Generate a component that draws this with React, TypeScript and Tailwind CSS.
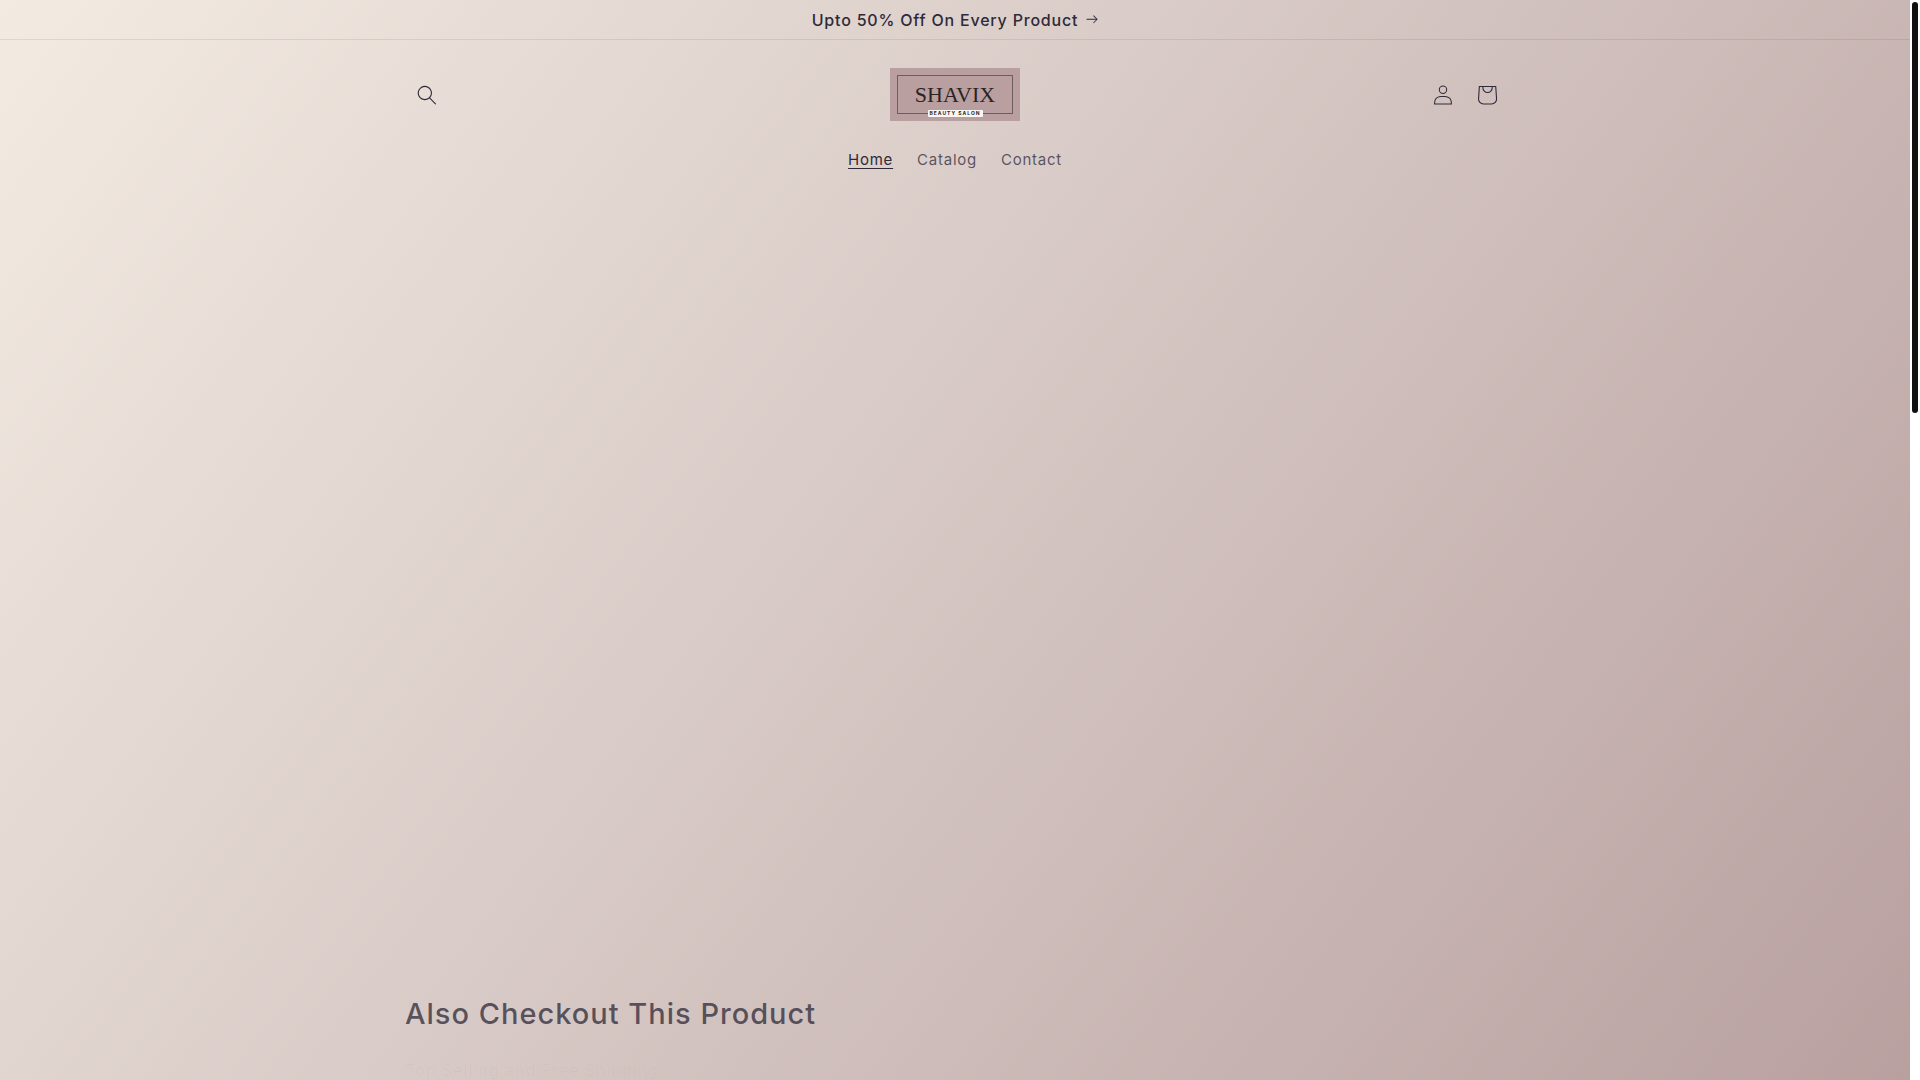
import React from "react";

const navItems = [
  { label: "Home", active: true },
  { label: "Catalog", active: false },
  { label: "Contact", active: false },
];

function SearchIcon() {
  return (
    <svg viewBox="0 0 18 19" className="size-5" fill="currentColor" fillRule="evenodd" aria-hidden="true">
      <path d="M11.03 11.68A5.784 5.784 0 112.85 3.5a5.784 5.784 0 018.18 8.18zm.26 1.12a6.78 6.78 0 11.72-.7l5.4 5.4a.5.5 0 11-.71.7l-5.41-5.4z" />
    </svg>
  );
}

function AccountIcon() {
  return (
    <svg viewBox="0 0 18 19" className="size-5" fill="currentColor" fillRule="evenodd" aria-hidden="true">
      <path d="M6 4.5a3 3 0 116 0 3 3 0 01-6 0zm3-4a4 4 0 100 8 4 4 0 000-8zm5.58 12.15c1.12.82 1.83 2.24 1.91 4.85H1.51c.08-2.6.79-4.03 1.9-4.85C4.66 11.75 6.5 11.5 9 11.5s4.35.26 5.58 1.15zM9 10.5c-2.5 0-4.65.24-6.17 1.35C1.27 12.98.5 14.93.5 18v.5h17V18c0-3.07-.77-5.02-2.33-6.15-1.52-1.1-3.67-1.35-6.17-1.35z" />
    </svg>
  );
}

function CartIcon() {
  return (
    <svg viewBox="0 0 40 40" className="size-11" fill="currentColor" fillRule="evenodd" aria-hidden="true">
      <path d="M15.75 11.8h-3.16l-.77 11.6a5 5 0 0 0 4.99 5.34h7.38a5 5 0 0 0 4.99-5.33L28.4 11.8zm0 1h-2.22l-.71 10.67a4 4 0 0 0 3.99 4.27h7.38a4 4 0 0 0 4-4.27l-.72-10.67h-2.22v.63a4.75 4.75 0 1 1-9.5 0zm8.5 0h-7.5v.63a3.75 3.75 0 1 0 7.5 0z" />
    </svg>
  );
}

function ArrowIcon() {
  return (
    <svg viewBox="0 0 14 10" className="w-3" fill="currentColor" fillRule="evenodd" aria-hidden="true">
      <path d="M8.537.808a.5.5 0 01.817-.162l4 4a.5.5 0 010 .708l-4 4a.5.5 0 11-.708-.708L11.793 5.5H1a.5.5 0 010-1h10.793L8.646 1.354a.5.5 0 01-.109-.546z" />
    </svg>
  );
}

function Logo() {
  return (
    <a href="#" className="block bg-[#b99f9f] p-[7px]">
      <span className="relative flex h-[39px] w-[116px] items-center justify-center border border-[#6f5c5c]">
        <span className="font-['Liberation_Serif',serif] text-[22px] leading-none text-[#2b2424]">SHAVIX</span>
        <span className="absolute -bottom-1 flex h-[7px] w-[55px] items-center justify-center rounded-[1px] bg-[#faf8f7] text-[5px] leading-none font-bold tracking-[1px] whitespace-nowrap text-[#2b2424]">
          BEAUTY SALON
        </span>
      </span>
    </a>
  );
}

export default function App() {
  return (
    <div className="flex h-screen overflow-hidden bg-white font-['Inter',sans-serif] text-[#2e2a39]">
      <div className="flex min-w-0 flex-1 flex-col bg-[linear-gradient(127deg,#f3ebe2_0%,#d8cac6_45%,#b8a09f_100%)]">
        <div className="flex h-10 items-center justify-center border-b border-[#2e2a39]/10">
          <a href="#" className="flex items-center gap-2 text-base leading-6 font-medium tracking-wider">
            Upto 50% Off On Every Product
            <ArrowIcon />
          </a>
        </div>

        <header className="mx-auto flex w-full max-w-[1200px] flex-col px-[50px] pt-7">
          <div className="grid grid-cols-[1fr_auto_1fr] items-center">
            <button type="button" aria-label="Search" className="flex size-11 items-center justify-center">
              <SearchIcon />
            </button>
            <Logo />
            <div className="-mr-1 flex justify-end">
              <a href="#" aria-label="Log in" className="flex size-11 items-center justify-center">
                <AccountIcon />
              </a>
              <a href="#" aria-label="Cart" className="flex size-11 items-center justify-center">
                <CartIcon />
              </a>
            </div>
          </div>
          <nav className="mt-7 flex justify-center gap-6 text-[15px] leading-[22px]">
            {navItems.map((item) => (
              <a
                key={item.label}
                href="#"
                className={
                  item.active
                    ? "tracking-wider underline underline-offset-3"
                    : "tracking-wider text-[#2e2a39]/75"
                }
              >
                {item.label}
              </a>
            ))}
          </nav>
        </header>

        <main className="mx-auto flex w-full max-w-[1200px] flex-1 flex-col justify-end px-[50px]">
          <h2 className="text-[29px] leading-9 font-medium tracking-[1px] text-[#2e2a39]/75">
            Also Checkout This Product
          </h2>
          <p className="mt-7 text-base leading-5 tracking-[1px] text-[#2e2a39]/3">Top Selling and Free Shipping</p>
        </main>
      </div>

      <div className="w-2.5 shrink-0 bg-white p-0.5" aria-hidden="true">
        <div className="h-[38.2%] w-1.5 rounded-full bg-[#101010]" />
      </div>
    </div>
  );
}
